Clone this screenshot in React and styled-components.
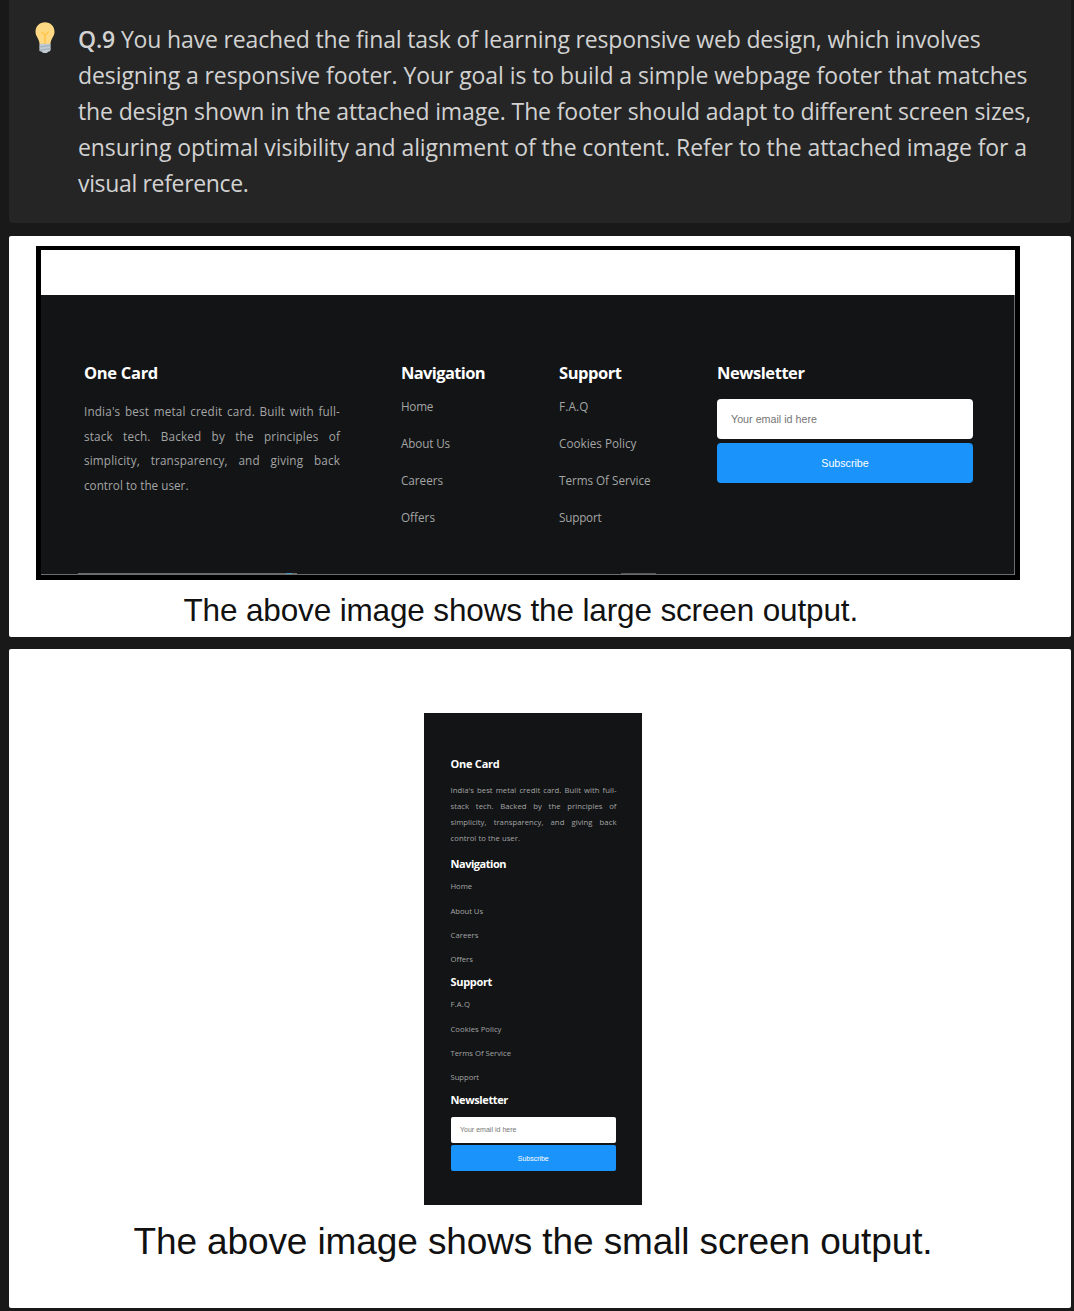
import React, { useLayoutEffect, useRef, useState } from "react";
import styled, { createGlobalStyle } from "styled-components";

const GlobalStyle = createGlobalStyle`
  * { box-sizing: border-box; }
  body { margin: 0; background: #191919; }
  h1, h2, h3, p, ul, figure, figcaption { margin: 0; padding: 0; }
`;

const Page = styled.main`
  width: 1074px;
  height: 1311px;
  padding: 0 3px 0 9px;
  overflow: hidden;
  background: #191919;
`;

const Callout = styled.section`
  display: flex;
  height: 223px;
  padding: 21px 0 0 25px;
  border-radius: 0 0 4px 4px;
  background: #252525;
`;

const Bulb = styled.svg`
  flex: none;
  width: 22px;
  height: 33px;
  margin: 0 22px 0 0;
`;

const Question = styled.p`
  color: #d2d2d2;
  font: 400 23px/36px "Open Sans", "Noto Sans", sans-serif;

  strong { font-weight: 600; }
`;

const Line = styled.span`
  display: block;
  width: max-content;
  white-space: nowrap;
`;

const Card = styled.figure`
  height: ${(p) => p.$height}px;
  margin-top: ${(p) => p.$gap}px;
  border-radius: 2px;
  background: #fff;
  overflow: hidden;
`;

const Frame = styled.div`
  width: 984px;
  height: 334px;
  margin: 10px 0 0 27px;
  border: solid #000;
  border-width: 4px 5px 5px;
  background: #fff;
`;

const WideFooter = styled.footer`
  display: grid;
  grid-template-columns: 317px 158px 158px 256px;
  height: 280px;
  margin-top: 45px;
  padding: 66px 0 0 43px;
  border-right: 1px solid #6d6d6d;
  border-bottom: 1px solid #6d6d6d;
  background: #121416;
  position: relative;
`;

const Sliver = styled.i`
  position: absolute;
  bottom: 0;
  left: ${(p) => p.$left}px;
  width: ${(p) => p.$width}px;
  height: 1px;
  background: ${(p) => p.$color};
`;

const NarrowFooter = styled.footer`
  display: flex;
  flex-direction: column;
  width: 218px;
  height: 492px;
  margin: 64.4px 0 0 415px;
  padding: 42.4px 25.5px 0 26.5px;
  background: #121416;
`;

const Column = styled.section`
  margin-bottom: ${(p) => p.$after || 0}px;
`;

const Heading = styled.h2`
  color: #fff;
  font: 700 ${(p) => (p.$small ? "11px/16px" : "16.5px/24px")} "Open Sans", "Noto Sans", sans-serif;
`;

const About = styled.p`
  width: ${(p) => (p.$small ? 166 : 256)}px;
  margin-top: ${(p) => (p.$small ? 10 : 14.6)}px;
  color: #a5a5a5;
  font: 400 ${(p) => (p.$small ? "7.7px/16px" : "11.7px/24.5px")} "Open Sans", "Noto Sans", sans-serif;
`;

const Justified = styled.span`
  display: block;
  white-space: nowrap;
  text-align: justify;
  text-align-last: justify;
  letter-spacing: ${(p) => (p.$small ? 0.05 : 0.17)}px;
`;

const Links = styled.ul`
  margin-top: ${(p) => (p.$small ? 2.6 : 3.4)}px;
  list-style: none;
  color: #a5a5a5;
  font: 400 ${(p) => (p.$small ? "7.7px/24.25px" : "11.7px/37px")} "Open Sans", "Noto Sans", sans-serif;
`;

const Control = styled.div`
  display: flex;
  align-items: center;
  width: ${(p) => (p.$small ? 165.5 : 256)}px;
  height: ${(p) => (p.$small ? 26 : 40)}px;
  border-radius: ${(p) => (p.$small ? 2 : 4)}px;
  font: 400 ${(p) => (p.$small ? 7 : 10.7)}px "Liberation Sans", Arial, sans-serif;
`;

const Field = styled(Control)`
  margin-top: ${(p) => (p.$small ? 9.3 : 14.3)}px;
  padding-left: ${(p) => (p.$small ? 9.5 : 14)}px;
  background: #fff;
  color: #757575;
`;

const Subscribe = styled(Control).attrs({ as: "button" })`
  justify-content: center;
  margin-top: ${(p) => (p.$small ? 2.5 : 4)}px;
  padding: 0;
  border: 0;
  background: #1a94fa;
  color: #fff;
`;

const Caption = styled.figcaption`
  margin: ${(p) => p.$top}px 0 0 ${(p) => p.$left}px;
  color: #111;
  font: 400 ${(p) => p.$size}px/40px "Liberation Sans", Arial, sans-serif;
`;

/* A single line of text tracked so that it spans the given measure. */
function Tracked({ width, children }) {
  const ref = useRef(null);
  const [spacing, setSpacing] = useState(0);
  useLayoutEffect(() => {
    const el = ref.current;
    const previous = el.style.letterSpacing;
    el.style.letterSpacing = "0px";
    const natural = el.getBoundingClientRect().width;
    el.style.letterSpacing = previous;
    setSpacing((width - natural) / el.textContent.length);
  }, [width]);
  return (
    <Line ref={ref} style={{ letterSpacing: `${spacing}px` }}>
      {children}
    </Line>
  );
}

const aboutLines = [
  "India's best metal credit card. Built with full-",
  "stack tech. Backed by the principles of",
  "simplicity, transparency, and giving back",
];

const menus = [
  {
    title: "Navigation",
    wide: 84,
    narrow: 55.5,
    items: [["Home", 32, 21.5], ["About Us", 49, 32.5], ["Careers", 42, 28], ["Offers", 34, 22.5]],
  },
  {
    title: "Support",
    wide: 62.5,
    narrow: 41.5,
    items: [["F.A.Q", 29.5, 19.5], ["Cookies Policy", 77.5, 51], ["Terms Of Service", 91.5, 60.5], ["Support", 42.5, 28.5]],
  },
];

function FooterContent({ small }) {
  return (
    <>
      <Column $after={small ? 9.9 : 0}>
        <Heading $small={small}><Tracked width={small ? 49 : 74}>One Card</Tracked></Heading>
        <About $small={small}>
          {aboutLines.map((line) => <Justified $small={small} key={line}>{line}</Justified>)}
          <Tracked width={small ? 69.5 : 104.5}>control to the user.</Tracked>
        </About>
      </Column>
      {menus.map((menu) => (
        <Column key={menu.title} $after={small ? 2.4 : 0}>
          <Heading $small={small}><Tracked width={small ? menu.narrow : menu.wide}>{menu.title}</Tracked></Heading>
          <Links $small={small}>
            {menu.items.map(([label, wide, narrow]) => (
              <li key={label}><Tracked width={small ? narrow : wide}>{label}</Tracked></li>
            ))}
          </Links>
        </Column>
      ))}
      <Column>
        <Heading $small={small}><Tracked width={small ? 57.5 : 87.5}>Newsletter</Tracked></Heading>
        <Field $small={small}><Tracked width={small ? 56.5 : 86}>Your email id here</Tracked></Field>
        <Subscribe $small={small}><Tracked width={small ? 31 : 47.5}>Subscribe</Tracked></Subscribe>
      </Column>
    </>
  );
}

export default function App() {
  return (
    <>
      <GlobalStyle />
      <Page>
        <Callout>
          <Bulb viewBox="0 0 22 33" fill="none">
            <path d="M11 1.2C5.6 1.2 1.5 5.3 1.5 10.7c0 4.7 3.7 6.8 4.1 12.3h10.8c.4-5.5 4.1-7.6 4.1-12.3 0-5.4-4.1-9.5-9.5-9.5Z" fill="#ffd883" />
            <path d="m7.2 10.5 3.8 3.7 3.8-3.7M11 14v9" stroke="#ffc84a" strokeWidth="1.6" />
            <path d="M5.4 22.8h11.2v6.2c0 .8-.8 1.4-2.4 1.7L12.8 32H9.2l-1.4-1.3c-1.6-.3-2.4-.9-2.4-1.7Z" fill="#c0cbd3" />
            <path d="m5.2 26.2 11.6-2M5.2 29.4l11.6-2" stroke="#9aa8b2" strokeWidth=".9" />
          </Bulb>
          <Question>
            <Tracked width={902.5}><strong>Q.9</strong> You have reached the final task of learning responsive web design, which involves</Tracked>
            <Tracked width={949.5}>designing a responsive footer. Your goal is to build a simple webpage footer that matches</Tracked>
            <Tracked width={953}>the design shown in the attached image. The footer should adapt to different screen sizes,</Tracked>
            <Tracked width={949}>ensuring optimal visibility and alignment of the content. Refer to the attached image for a</Tracked>
            <Tracked width={170.5}>visual reference.</Tracked>
          </Question>
        </Callout>

        <Card $height={401.5} $gap={12.5}>
          <Frame>
            <WideFooter>
              <FooterContent small={false} />
              <Sliver $left={37} $width={219} $color="#6d6d6d" />
              <Sliver $left={245} $width={6} $color="#4e9cc4" />
              <Sliver $left={580} $width={35} $color="#555" />
            </WideFooter>
          </Frame>
          <Caption $top={10} $left={174.5} $size={31.5}>
            <Tracked width={674.5}>The above image shows the large screen output.</Tracked>
          </Caption>
        </Card>

        <Card $height={658.5} $gap={12}>
          <NarrowFooter>
            <FooterContent small />
          </NarrowFooter>
          <Caption $top={16.5} $left={124.5} $size={37}>
            <Tracked width={799}>The above image shows the small screen output.</Tracked>
          </Caption>
        </Card>
      </Page>
    </>
  );
}
